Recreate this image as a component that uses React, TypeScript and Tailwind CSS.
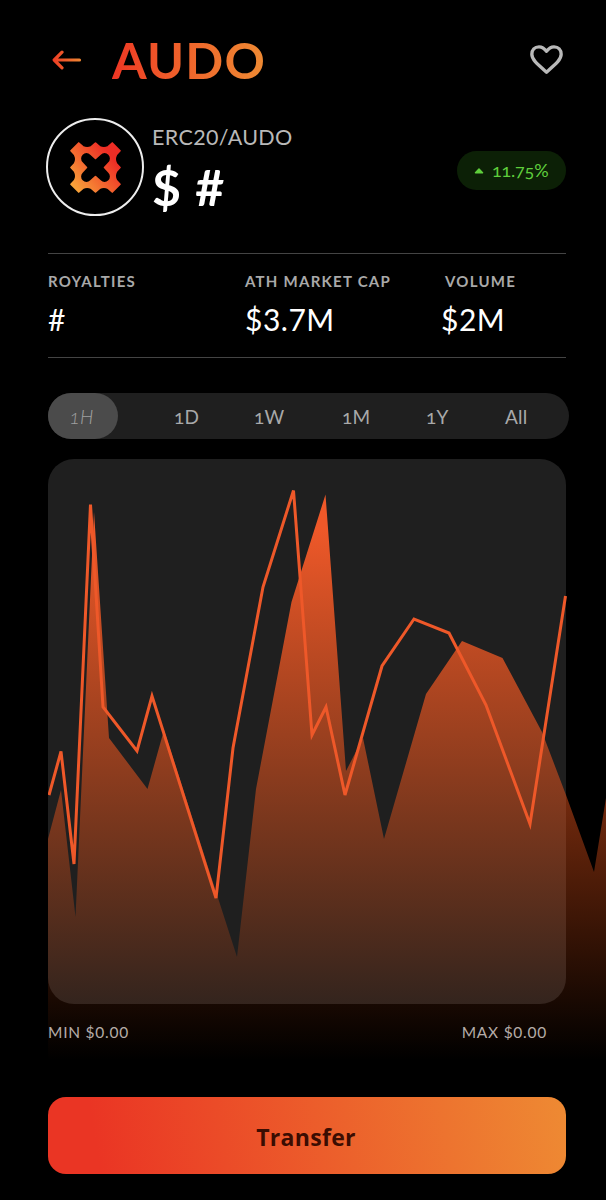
const STATS = [
  { label: 'ROYALTIES', value: '#', col: 'w-[197px]', offset: '' },
  { label: 'ATH MARKET CAP', value: '$3.7M', col: 'w-[196px]', offset: '' },
  { label: 'VOLUME', value: '$2M', col: 'w-[125px]', offset: 'pl-1' },
];

const RANGES = [
  { label: '1D', width: 'w-[80px]' },
  { label: '1W', width: 'w-[88px]' },
  { label: '1M', width: 'w-[84px]' },
  { label: '1Y', width: 'w-[79px]' },
  { label: 'All', width: 'w-[64px]' },
];

const AREA_POINTS =
  '0,380 13,331 27.5,458 46,53 61,279 99.5,330 116,271 189,498 208,330 243.5,143 277.5,35.5 298,312 315,279 336,380 378,235 414,182 454.5,199 494,273 518,336 546,413 558,339 558,601 0,601';

const LINE_POINTS =
  '1,336 13,292.5 26,405 42.5,45.5 55,248 89,292 104,237 168,439 185,289 215,128 245.5,31.5 264,276 278,248 297,336 334,207 366,160 401,174 438,246 482,365 517.5,137';

function BackArrow() {
  return (
    <svg className="w-[30px] h-[20px]" viewBox="0 0 30 20" fill="none">
      <defs>
        <linearGradient id="arrow" x1="0" y1="0" x2="30" y2="0" gradientUnits="userSpaceOnUse">
          <stop stopColor="#ee3a24" />
          <stop offset="1" stopColor="#ee8a33" />
        </linearGradient>
      </defs>
      <path d="M27.5 10H2.5M10 2.2L2.2 10L10 17.8" stroke="url(#arrow)" strokeWidth="3.2" strokeLinecap="round" strokeLinejoin="round" />
    </svg>
  );
}

function HeartIcon() {
  return (
    <svg className="w-[33px] h-[29px]" viewBox="0 0 99 87" fill="none">
      <path
        d="M49.5 19C43 10 34 5.5 27 5.5C14 5.5 5.5 15 5.5 28C5.5 43 18 54 49.5 81.5C81 54 93.5 43 93.5 28C93.5 15 85 5.5 72 5.5C65 5.5 56 10 49.5 19Z"
        stroke="#b9b9b9"
        strokeWidth="10"
        strokeLinejoin="round"
      />
    </svg>
  );
}

function TokenLogo() {
  return (
    <div className="w-[98px] h-[98px] shrink-0 rounded-full border-2 border-[#ededed] flex items-center justify-center">
      <svg className="w-[51px] h-[51px]" viewBox="0 0 152 152">
        <defs>
          <linearGradient id="logo" x1="0" y1="1" x2="0.85" y2="0.3">
            <stop stopColor="#f9b03c" />
            <stop offset="0.5" stopColor="#f36c30" />
            <stop offset="1" stopColor="#ee2d25" />
          </linearGradient>
        </defs>
        <path
          fill="url(#logo)"
          stroke="url(#logo)"
          strokeWidth="5"
          strokeLinejoin="round"
          fillRule="evenodd"
          d="M26 3L38 14Q51 21 64 14L76 3L88 14Q101 21 114 14L126 3L149 26L138 38Q131 51 138 64L149 76L138 88Q131 101 138 114L149 126L126 149L114 138Q101 131 88 138L76 149L64 138Q51 131 38 138L26 149L3 126L14 114Q21 101 14 88L3 76L14 64Q21 51 14 38L3 26ZM76 49L62 36A17 17 0 0 0 36 62L49 76L36 90A17 17 0 0 0 62 116L76 103L90 116A17 17 0 0 0 116 90L103 76L116 62A17 17 0 0 0 90 36Z"
        />
      </svg>
    </div>
  );
}

function PriceChart() {
  return (
    <div className="relative mt-5 h-[545px] w-[518px] rounded-[26px] bg-[#1f1f1f]">
      {/* the area runs past the card, to the screen edge */}
      <svg className="absolute left-0 top-0 w-[558px] h-[601px]" viewBox="0 0 558 601" fill="none">
        <defs>
          <linearGradient id="area" x1="0" y1="36" x2="0" y2="601" gradientUnits="userSpaceOnUse">
            <stop offset="0.06" stopColor="#ee5829" />
            <stop offset="1" stopColor="#e2500f" stopOpacity="0" />
          </linearGradient>
        </defs>
        <polygon points={AREA_POINTS} fill="url(#area)" />
        <polyline points={LINE_POINTS} stroke="#ee5829" strokeWidth="3" />
      </svg>
    </div>
  );
}

export default function App() {
  return (
    <div className="w-[606px] h-[1200px] overflow-hidden bg-black pl-12 pt-[29px] text-white font-['Lato',sans-serif]">
      <header className="flex items-center w-[518px] h-[60px]">
        <div className="pl-1 pt-0.5">
          <BackArrow />
        </div>
        <h1 className="ml-[30px] mt-px bg-linear-to-r from-[#ee3524] to-[#ee8a33] bg-clip-text text-transparent text-[50px] leading-[60px] font-bold tracking-[1.2px]">
          AUDO
        </h1>
        <button className="ml-auto mr-[3px] mt-px">
          <HeartIcon />
        </button>
      </header>

      <section className="-ml-[2px] mt-[29px] flex items-start w-[520px] h-[98px]">
        <TokenLogo />
        <div className="ml-2 pt-[6px]">
          <p className="text-[21.5px] leading-[26px] tracking-[0.35px] text-[#b9b9b9]">ERC20/AUDO</p>
          <p className="mt-[7px] text-[50px] leading-[60px] font-bold tracking-[1px]">$ #</p>
        </div>
        <div className="ml-auto mt-[33px] flex items-center w-[109px] h-[39px] rounded-full bg-[#0c2006] pl-[17px] text-[#5fce3c]">
          <svg className="w-[10px] h-[6px]" viewBox="0 0 10 6">
            <path d="M5 1L8.5 4.8H1.5Z" fill="currentColor" stroke="currentColor" strokeWidth="1.5" strokeLinejoin="round" />
          </svg>
          <span className="ml-2 text-[18px] leading-[39px] tracking-[-0.2px] [font-feature-settings:'onum']">11.75%</span>
        </div>
      </section>

      <section className="mt-[37px] flex w-[518px] h-[105px] border-y border-[#444] pt-[17px]">
        {STATS.map((stat) => (
          <div key={stat.label} className={stat.col}>
            <p className={`text-[15px] leading-5 font-bold tracking-[1.25px] text-[#a9a9a9] ${stat.offset}`}>{stat.label}</p>
            <p className="mt-[10px] text-[30px] leading-9 tracking-[0.5px]">{stat.value}</p>
          </div>
        ))}
      </section>

      <nav className="mt-[35px] flex items-center w-[521px] h-[46px] rounded-full bg-[#1f1f1f] text-[19px] text-[#a9a9a9] tracking-[0.2px] [font-feature-settings:'onum']">
        <button className="w-[70px] h-[46px] mr-[56px] pt-0.5 pr-[3px] rounded-full bg-[#4b4b4b] font-light italic text-[#a0a0a0]">1H</button>
        {RANGES.map((range) => (
          <button key={range.label} className={`pt-0.5 text-left ${range.width}`}>
            {range.label}
          </button>
        ))}
      </nav>

      <PriceChart />

      <div className="relative mt-[18px] flex justify-between w-[499px] text-[15.5px] leading-5 tracking-[0.75px] text-[#b5aca8]">
        <span>MIN $0.00</span>
        <span>MAX $0.00</span>
      </div>

      <button className="mt-[55px] w-[518px] h-[77px] pt-[3px] pr-[2px] rounded-[18px] bg-linear-[80deg] from-[#ea3524] from-10% to-[#ee8a33] text-[23px] font-bold tracking-[0.3px] text-[#3b0d02] font-['Open_Sans',sans-serif]">
        Transfer
      </button>
    </div>
  );
}
